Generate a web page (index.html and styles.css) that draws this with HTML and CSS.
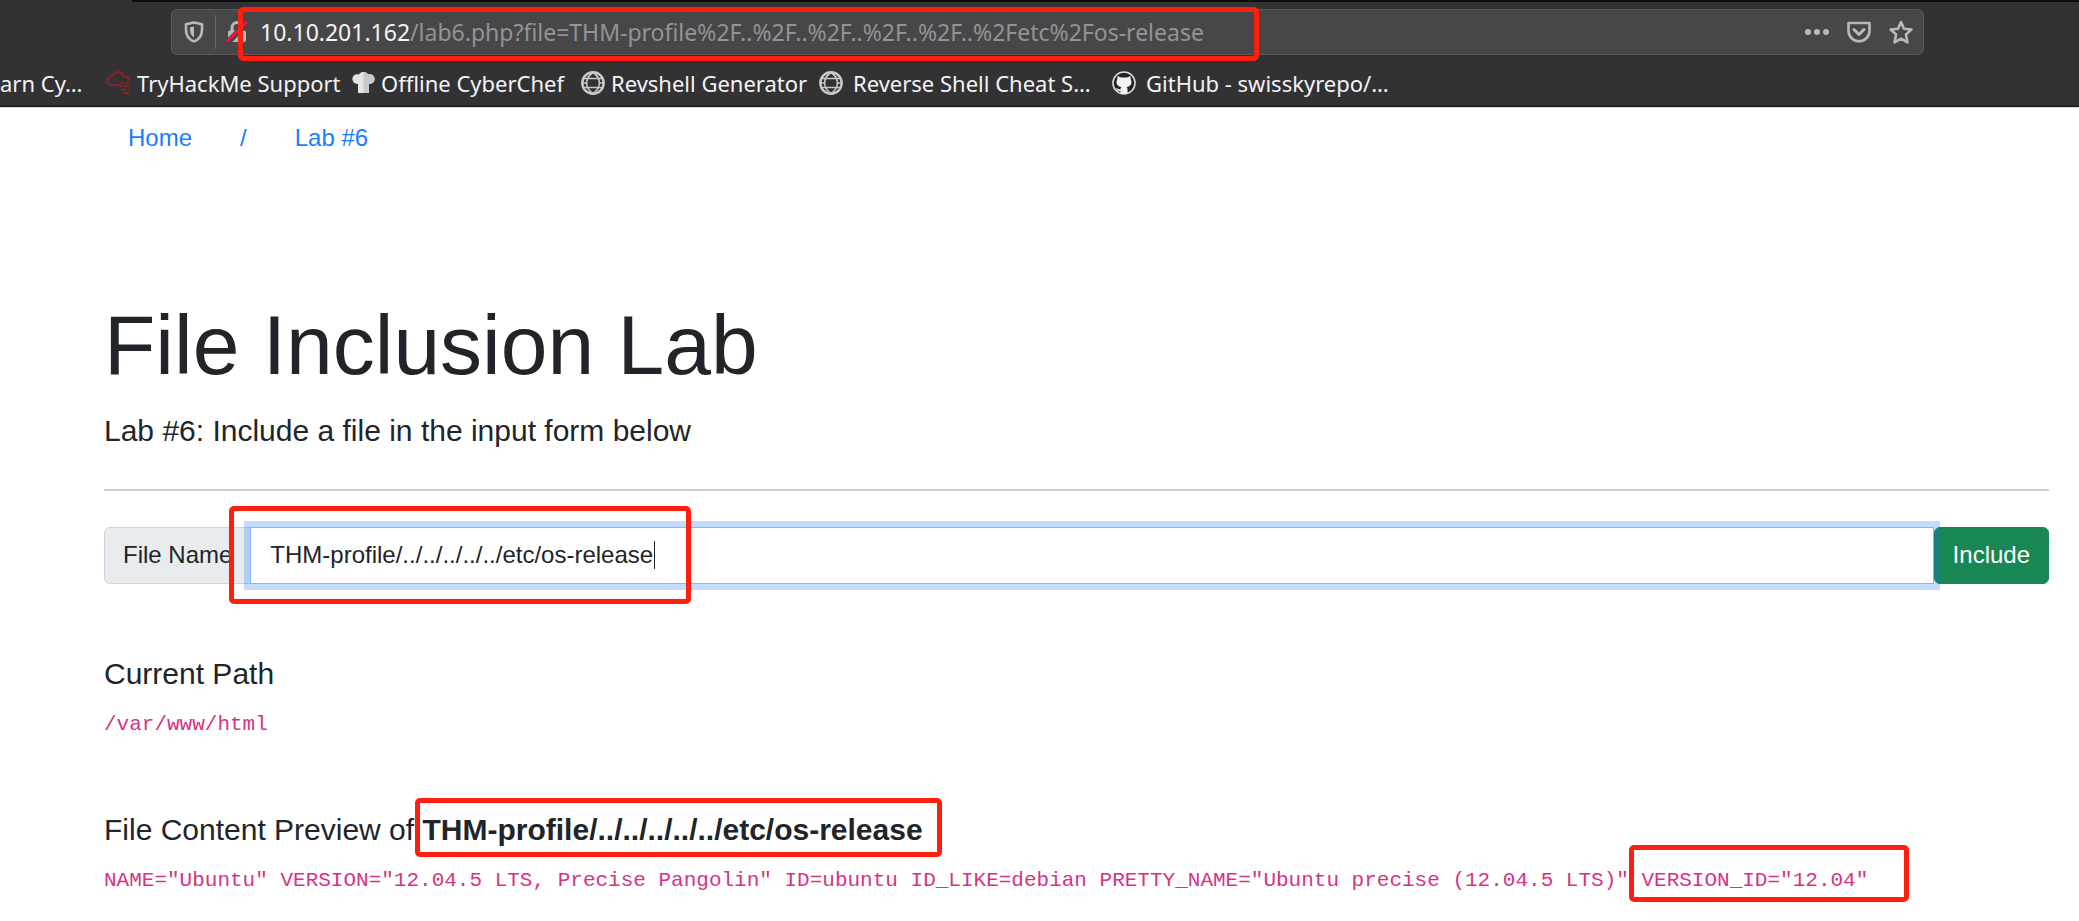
FILE: index.html
```html
<!DOCTYPE html>
<html lang="en">
<head>
<meta charset="utf-8">
<meta name="viewport" content="width=device-width, initial-scale=1">
<title>File Inclusion Lab</title>
<link rel="stylesheet" href="styles.css">
</head>
<body>
<header class="browser">
  <div class="tab-edge"></div>
  <div class="urlbar">
    <button class="tool" type="button" aria-label="Tracking protection">
      <svg width="20" height="22" viewBox="0 0 20 22" fill="none"><path d="M10 1.400 18 3.200V9c0 5.600-3.200 9.600-8 11.400C5.200 18.600 2 14.600 2 9V3.200Z" stroke="#b9b9bb" stroke-width="2.600" stroke-linejoin="round"/><path d="M10 5.500V16.300C7.300 14.700 6 12.300 6 9V6.300Z" fill="#b9b9bb"/></svg>
    </button>
    <span class="divider"></span>
    <button class="tool" type="button" aria-label="Connection is not secure">
      <svg width="22" height="24" viewBox="0 0 22 24"><path d="M6 11V7.500a5 5 0 0 1 10 0V11" fill="none" stroke="#b9b9bb" stroke-width="3"/><rect x="2" y="10.500" width="18" height="11.500" rx="2" fill="#b9b9bb"/><path d="M1 23 21 3" stroke="#464648" stroke-width="6"/><path d="M1 21.500 21 2" stroke="#f5123f" stroke-width="2.800"/></svg>
    </button>
    <div class="address" role="textbox" contenteditable="true" spellcheck="false" aria-label="Address"><span class="host">10.10.201.162</span>/lab6.php?file=THM-profile%2F..%2F..%2F..%2F..%2F..%2Fetc%2Fos-release</div>
    <div class="page-actions">
      <button class="tool" type="button" aria-label="Page actions">
        <svg width="24" height="24" viewBox="0 0 24 24" fill="#b9b9bb"><circle cx="3" cy="12" r="3"/><circle cx="12" cy="12" r="3"/><circle cx="21" cy="12" r="3"/></svg>
      </button>
      <button class="tool" type="button" aria-label="Save to Pocket">
        <svg width="24" height="24" viewBox="0 0 24 24" fill="none" stroke="#b9b9bb" stroke-width="2.600" stroke-linejoin="round"><path d="M1.500 3h21v8a10.500 10.200 0 0 1-21 0Z"/><path d="m7 9.500 5 5 5-5" stroke-width="3" stroke-linecap="round"/></svg>
      </button>
      <button class="tool" type="button" aria-label="Bookmark this page">
        <svg width="24" height="24" viewBox="0 0 24 24" fill="none" stroke="#b9b9bb" stroke-width="2.600" stroke-linejoin="round"><path d="m12 2 3 6.700 7.400.8-5.500 5 1.500 7.800L12 18.700l-6.400 3.600 1.500-7.800-5.500-5L9 8.700Z"/></svg>
      </button>
    </div>
    <span class="mark mark-url"></span>
  </div>
  <nav class="bookmarks" aria-label="Bookmarks">
    <a href="#">arn Cy…</a>
    <a href="#"><svg width="25" height="25" viewBox="0 0 25 25" fill="none" stroke="#a31c20" stroke-width="1.600"><path d="M13 15H5a4 4 0 0 1-1-7.800 3 3 0 0 1 3-1.700 5.500 5.500 0 0 1 10.500 1 4.500 4.500 0 0 1 5.800 5"/><path d="M14 13h4m2 0h3M13 16h3m2 0h5M17 20h3m2-.500h1.500M18 23h5M16 19h1" stroke-width="1.300"/></svg><span>TryHackMe Support</span></a>
    <a href="#"><svg width="23" height="24" viewBox="0 0 23 24"><path d="M6 22V13C2 13 0 10 .5 7 1 4 4 2.500 7 3.500 8 1.500 10 1 11.500 1S15 1.500 16 3.500c3-1 6 .5 6.500 3.500S21 13 17 13v9Z" fill="#e4e4e4"/><path d="M11.500 1c1.500 0 3.500.5 4.500 2.500 3-1 6 .5 6.500 3.500S21 13 17 13v9h-5.500Z" fill="#c9c9c9"/></svg><span>Offline CyberChef</span></a>
    <a href="#"><svg width="24" height="24" viewBox="0 0 24 24" fill="none" stroke="#c8c8c9"><circle cx="12" cy="12" r="10.700" stroke-width="2.400"/><path d="M12 1.500C3.500 7 3.500 17 12 22.500 20.500 17 20.500 7 12 1.500ZM3 7.500h18M3 16.500h18M1.500 12h4M18.500 12h4" stroke-width="1.500"/></svg><span>Revshell Generator</span></a>
    <a class="wide" href="#"><svg width="24" height="24" viewBox="0 0 24 24" fill="none" stroke="#c8c8c9"><circle cx="12" cy="12" r="10.700" stroke-width="2.400"/><path d="M12 1.500C3.500 7 3.500 17 12 22.500 20.500 17 20.500 7 12 1.500ZM3 7.500h18M3 16.500h18M1.500 12h4M18.500 12h4" stroke-width="1.500"/></svg><span>Reverse Shell Cheat S…</span></a>
    <a class="wide" href="#"><svg width="24" height="24" viewBox="0 0 24 24"><circle cx="12" cy="12" r="11" fill="#202329" stroke="#dcdcdc" stroke-width="1.600"/><path d="M5.500 5 9 6.500h6L18.500 5l.3 3.500c2 4-.3 7-4.300 7.500.8.800 1 1.500 1 2.500v4.300h-7V20c-2 .4-3-.2-3.800-1.800l-1-1.200c1.800-.300 2.300 1.700 4.800 1.300 0-1 .2-1.700 1-2.300-4-.5-6.300-3.500-4.300-7.500Z" fill="#f4f4f4"/></svg><span>GitHub - swisskyrepo/…</span></a>
  </nav>
</header>
<main class="page">
  <nav class="crumbs" aria-label="Breadcrumb">
    <a href="#">Home</a>
    <a href="#">/</a>
    <a href="#">Lab #6</a>
  </nav>
  <section class="intro">
    <h1>File Inclusion Lab</h1>
    <p class="lead">Lab #6: Include a file in the input form below</p>
  </section>
  <hr>
  <form class="include-form">
    <label class="addon" for="file">File Name</label>
    <div class="field">
      <input id="file" name="file" type="text" autocomplete="off" value="THM-profile/../../../../../etc/os-release">
      <span class="caret"></span>
      <span class="mark mark-field"></span>
    </div>
    <button class="submit" type="button">Include</button>
  </form>
  <section class="result">
    <h2>Current Path</h2>
    <div><code>/var/www/html</code></div>
  </section>
  <section class="result">
    <h2>File Content Preview of <strong class="marked">THM-profile/../../../../../etc/os-release<span class="mark mark-title"></span></strong></h2>
    <div><code>NAME="Ubuntu" VERSION="12.04.5 LTS, Precise Pangolin" ID=ubuntu ID_LIKE=debian PRETTY_NAME="Ubuntu precise (12.04.5 LTS)" <span class="marked">VERSION_ID="12.04"<span class="mark mark-version"></span></span></code></div>
  </section>
</main>
</body>
</html>
```
FILE: styles.css
```css
* {
  box-sizing: border-box;
}

body {
  margin: 0;
  background: #fff;
  color: #212529;
  font: 24px/36px "Liberation Sans", Arial, sans-serif;
}

a {
  text-decoration: none;
}

button {
  font: inherit;
  cursor: pointer;
}

/* Browser toolbar */
.browser {
  background: #323234;
  border-bottom: 1px solid #d4d4d6;
  box-shadow: inset 0 -2px #202124;
  font: 22px/30px "Noto Sans", "Open Sans", sans-serif;
}

.tab-edge {
  height: 2px;
  margin-left: 132px;
  background: #0c0c0d;
}

.urlbar {
  position: relative;
  display: flex;
  align-items: center;
  height: 46px;
  margin: 7px 155px 0 171px;
  padding: 0 10px 0 12px;
  background: #474749;
  border: 1px solid #59595b;
  border-radius: 6px;
}

.tool {
  display: flex;
  padding: 0;
  border: 0;
  background: none;
}

.divider {
  width: 1px;
  height: 34px;
  margin: 0 10px 0 11px;
  background: #66666a;
}

.address {
  flex: 1;
  margin-left: 12px;
  color: #939395;
  font-size: 23px;
  white-space: nowrap;
  outline: none;
}

.host {
  color: #f3f3f4;
}

.page-actions {
  display: flex;
  gap: 18px;
}

.bookmarks {
  display: grid;
  grid-template-columns: 106px 246px 229px 238px 293px auto;
  align-items: center;
  height: 52px;
  padding-top: 3px;
}

.bookmarks a {
  display: flex;
  align-items: center;
  gap: 6px;
  color: #f3f3f4;
  white-space: nowrap;
}

.bookmarks .wide {
  gap: 10px;
}

/* Page */
.page {
  padding: 0 30px 24px 104px;
}

.crumbs {
  display: flex;
}

.crumbs a {
  padding: 12px 24px;
  color: #1a7cff;
}

.intro {
  padding-top: 127px;
}

h1 {
  margin: 0 0 12px;
  font-size: 84px;
  font-weight: 400;
  line-height: 101px;
}

.lead {
  margin: 0;
  font-size: 30px;
  line-height: 45px;
}

hr {
  height: 2px;
  margin: 36px 0;
  border: 0;
  background: #cccdce;
}

.include-form {
  display: flex;
  height: 57px;
}

.addon {
  padding: 9px 18px;
  background: #e9ecef;
  border: 1px solid #ced4da;
  border-radius: 6px 0 0 6px;
}

.field {
  position: relative;
  z-index: 1;
  flex: 1;
  margin-left: -1px;
}

.field input {
  display: block;
  width: 100%;
  height: 100%;
  padding: 8px 19px 10px;
  border: 1px solid #86b7fe;
  border-radius: 0;
  outline: none;
  background: #fff;
  color: inherit;
  font: inherit;
  box-shadow: 0 0 0 6px rgba(13, 110, 253, 0.25);
}

.caret {
  position: absolute;
  top: 14px;
  left: 404px;
  width: 1px;
  height: 28px;
  background: #212529;
}

.submit {
  padding: 8px 18px 10px;
  background: #198754;
  border: 1px solid #198754;
  border-radius: 6px;
  color: #fff;
}

.result {
  margin-top: 72px;
}

h2 {
  margin: 0 0 12px;
  font-size: 30px;
  font-weight: 400;
  line-height: 36px;
}

code {
  color: #d63384;
  font-family: "Liberation Mono", monospace;
  font-size: 21px;
  line-height: 24px;
}

/* Red highlight frames drawn over the content */
.marked {
  position: relative;
}

.mark {
  position: absolute;
  border: 5px solid #ff1f0f;
  border-radius: 5px;
  pointer-events: none;
}

.mark-url {
  top: -3px;
  left: 66px;
  width: 1021px;
  height: 54px;
}

.mark-field {
  top: -21px;
  left: -21px;
  width: 462px;
  height: 98px;
}

.mark-title {
  inset: -15px -19px -11px -7px;
}

.mark-version {
  inset: -24px -41px -10px -12px;
}
```
